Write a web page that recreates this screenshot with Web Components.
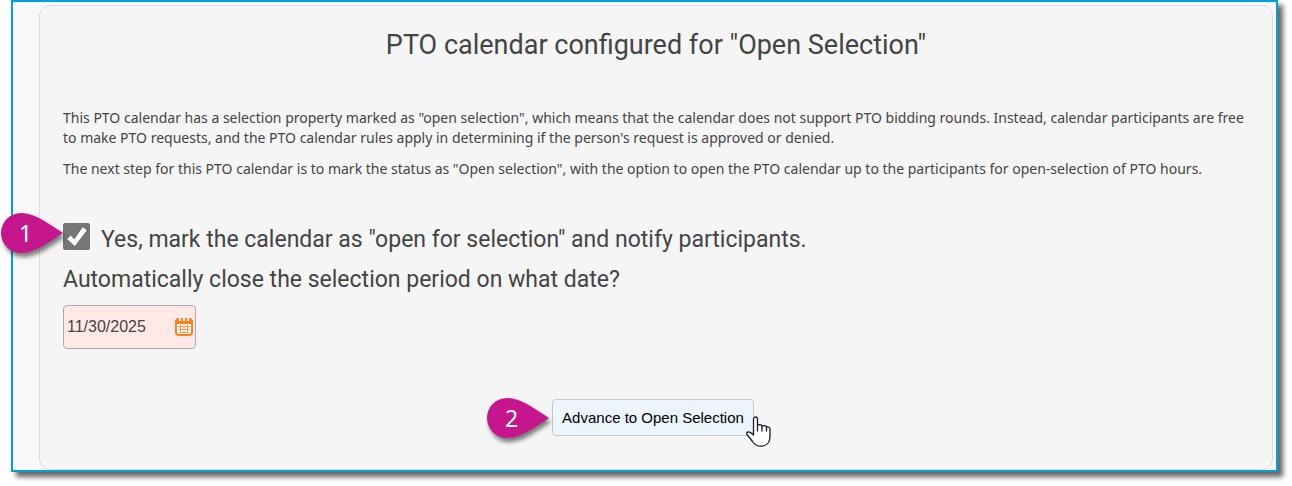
<!DOCTYPE html>
<html lang="en">
<head>
<meta charset="utf-8">
<title>PTO calendar</title>
<style>
    body {
        margin: 0;
        background: #fff;
        color: #444;
        font-family: Roboto, "Liberation Sans", sans-serif;
    }
</style>
</head>
<body>
<pto-window>
    <pto-panel>
        <span slot="title">PTO calendar configured for "Open Selection"</span>
        <pto-notes>
            <p>This PTO calendar has a selection property marked as "open selection", which means that the calendar does not support PTO bidding rounds. Instead, calendar participants are free to make PTO requests, and the PTO calendar rules apply in determining if the person's request is approved or denied.</p>
            <p>The next step for this PTO calendar is to mark the status as "Open selection", with the option to open the PTO calendar up to the participants for open-selection of PTO hours.</p>
        </pto-notes>
        <pto-check step="1" checked>Yes, mark the calendar as "open for selection" and notify participants.</pto-check>
        <pto-date value="11/30/2025">Automatically close the selection period on what date?</pto-date>
        <pto-action step="2">Advance to Open Selection</pto-action>
    </pto-panel>
</pto-window>

<script>
class PtoWindow extends HTMLElement {
    constructor(){
        super();
        this.attachShadow({mode: 'open'});
        this.shadowRoot.innerHTML = `
        <style>
            :host{
                display: block;
                margin: 0 14px 14px 11px;
                padding: 3px 3px 0 26px;
                border: 2px solid #009fda;
                background: #f8f8f8;
                box-shadow: 5px 5px 5px rgba(0, 0, 0, .6);
            }
        </style>
        <slot></slot>`;
    }
}

class PtoPanel extends HTMLElement {
    constructor(){
        super();
        this.attachShadow({mode: 'open'});
        this.shadowRoot.innerHTML = `
        <style>
            :host{
                display: block;
                padding: 21px 23px 33px;
                border: 1px solid #dcdcdc;
                border-radius: 11px;
                background: #f5f5f5;
            }
            h1{
                margin: 0 0 45px;
                font-size: 27px;
                line-height: 36px;
                font-weight: 400;
                text-align: center;
            }
        </style>
        <h1><slot name="title"></slot></h1>
        <slot></slot>`;
    }
}

class PtoNotes extends HTMLElement {
    constructor(){
        super();
        this.attachShadow({mode: 'open'});
        this.shadowRoot.innerHTML = `
        <style>
            :host{
                display: block;
                margin-bottom: 44px;
                font: 14px/20px "Noto Sans", "Open Sans", sans-serif;
            }
            ::slotted(p){
                margin: 0 0 11px;
            }
        </style>
        <slot></slot>`;
    }
}

// numbered teardrop that points at the control on its right
class PtoMarker extends HTMLElement {
    constructor(){
        super();
        this.attachShadow({mode: 'open'});
        this.shadowRoot.innerHTML = `
        <style>
            :host{
                position: absolute;
                right: 100%;
                top: 50%;
                width: 62px;
                height: 40px;
                margin-top: -20px;
                color: #fff;
                font: 23px/40px "Noto Sans", "Open Sans", sans-serif;
            }
            svg{
                position: absolute;
                inset: 0;
                overflow: visible;
                filter: drop-shadow(2px 4px 2px rgba(0, 0, 0, .5));
            }
            span{
                position: relative;
                display: block;
                width: 49px;
                text-align: center;
            }
        </style>
        <svg width="62" height="40" viewBox="0 0 62 40" aria-hidden="true">
            <path fill="#c6168d" d="M62 20C49 12 35 0 20 0a20 20 0 0 0 0 40C35 40 49 28 62 20z"/>
        </svg>
        <span><slot></slot></span>`;
    }
}

class PtoCheck extends HTMLElement {
    constructor(){
        super();
        this.attachShadow({mode: 'open'});
        this.shadowRoot.innerHTML = `
        <style>
            :host{
                display: flex;
                align-items: flex-start;
                gap: 11px;
                margin-bottom: 6px;
                font-size: 23px;
                line-height: 34px;
            }
            .box{
                position: relative;
                display: flex;
            }
            pto-marker{
                margin-top: -24px;
            }
            input{
                appearance: none;
                width: 27px;
                height: 27px;
                margin: 0;
                border: 1px solid #767676;
                border-radius: 2px;
                background: #fff;
            }
            input:checked{
                background: #767676;
            }
            input:checked::before{
                content: "";
                display: block;
                height: 100%;
                background: #fff;
                clip-path: polygon(13% 60%, 27% 46%, 41% 62%, 75% 13%, 91% 25%, 43% 88%);
            }
        </style>
        <div class="box">
            <pto-marker></pto-marker>
            <input type="checkbox" id="open">
        </div>
        <label for="open"><slot></slot></label>`;
    }

    connectedCallback(){
        this.shadowRoot.querySelector('pto-marker').textContent = this.getAttribute('step');
        this.shadowRoot.querySelector('input').checked = this.hasAttribute('checked');
    }
}

class PtoDate extends HTMLElement {
    constructor(){
        super();
        this.attachShadow({mode: 'open'});
        this.shadowRoot.innerHTML = `
        <style>
            :host{
                display: block;
                margin-bottom: 50px;
            }
            label{
                display: block;
                margin-bottom: 8px;
                font-size: 23px;
                line-height: 34px;
            }
            .field{
                display: flex;
                align-items: center;
                box-sizing: border-box;
                width: 133px;
                height: 44px;
                padding: 0 2px 0 3px;
                border: 1px solid #aaa;
                border-radius: 4px;
                background: #ffe9e6;
            }
            input{
                flex: 1;
                min-width: 0;
                padding: 0;
                border: 0;
                outline: 0;
                background: none;
                color: #444;
                font: 16px "Liberation Sans", Arial, sans-serif;
            }
            button{
                display: flex;
                padding: 0;
                border: 0;
                background: none;
            }
        </style>
        <label for="date"><slot></slot></label>
        <div class="field">
            <input type="text" id="date">
            <button type="button" aria-label="Choose date">
                <svg width="18" height="18" viewBox="0 0 18 18">
                    <rect width="18" height="18" rx="4" fill="#ff7f1e"/>
                    <path fill="#fff" d="M2 6h14v8q0 2-2 2H4q-2 0-2-2z"/>
                    <path fill="none" stroke="#fff" stroke-width="2" d="M5 0v3M9 0v3M13 0v3"/>
                    <path fill="none" stroke="#ff9d55" d="M3 8.500h12M3 11.500h12M5.500 6.500v8M9 6.500v8M12.500 6.500v8M4 14.500h10"/>
                </svg>
            </button>
        </div>`;
    }

    connectedCallback(){
        this.shadowRoot.querySelector('input').value = this.getAttribute('value');
    }
}

class PtoAction extends HTMLElement {
    constructor(){
        super();
        this.attachShadow({mode: 'open'});
        this.shadowRoot.innerHTML = `
        <style>
            :host{
                display: flex;
                justify-content: center;
                padding-right: 6px;
            }
            .wrap{
                position: relative;
            }
            pto-marker{
                margin-right: 3px;
            }
            button{
                display: block;
                height: 37px;
                padding: 0 9px;
                border: 1px solid #c8c8c8;
                border-radius: 4px;
                background: #ecf4fc;
                color: #000;
                font: 15px "Liberation Sans", Arial, sans-serif;
            }
            .hand{
                position: absolute;
                right: -17px;
                bottom: -11px;
            }
        </style>
        <div class="wrap">
            <pto-marker></pto-marker>
            <button type="button"><slot></slot></button>
            <svg class="hand" width="25" height="31" viewBox="0 0 25 31" aria-hidden="true">
                <path fill="#fff" stroke="#1c1c2b" stroke-width="1.300" stroke-linejoin="round"
                    d="M7.500 19V3a2 2 0 0 1 4 0v6q4-1 4.500 1 4-1 4.500 1 3.500-.5 3.500 2v8c0 5.500-3.500 9.200-9.500 9.200-4 0-6-1.700-8-4.700L1 18.500q-1-2 1-2.500 2-.3 5.500 3z"/>
                <path fill="none" stroke="#1c1c2b" stroke-width="1.300" stroke-linecap="round" d="M11.500 9v6M16 10v5M20.500 11v4"/>
            </svg>
        </div>`;
    }

    connectedCallback(){
        this.shadowRoot.querySelector('pto-marker').textContent = this.getAttribute('step');
    }
}

customElements.define('pto-window', PtoWindow);
customElements.define('pto-panel', PtoPanel);
customElements.define('pto-notes', PtoNotes);
customElements.define('pto-marker', PtoMarker);
customElements.define('pto-check', PtoCheck);
customElements.define('pto-date', PtoDate);
customElements.define('pto-action', PtoAction);
</script>
</body>
</html>
